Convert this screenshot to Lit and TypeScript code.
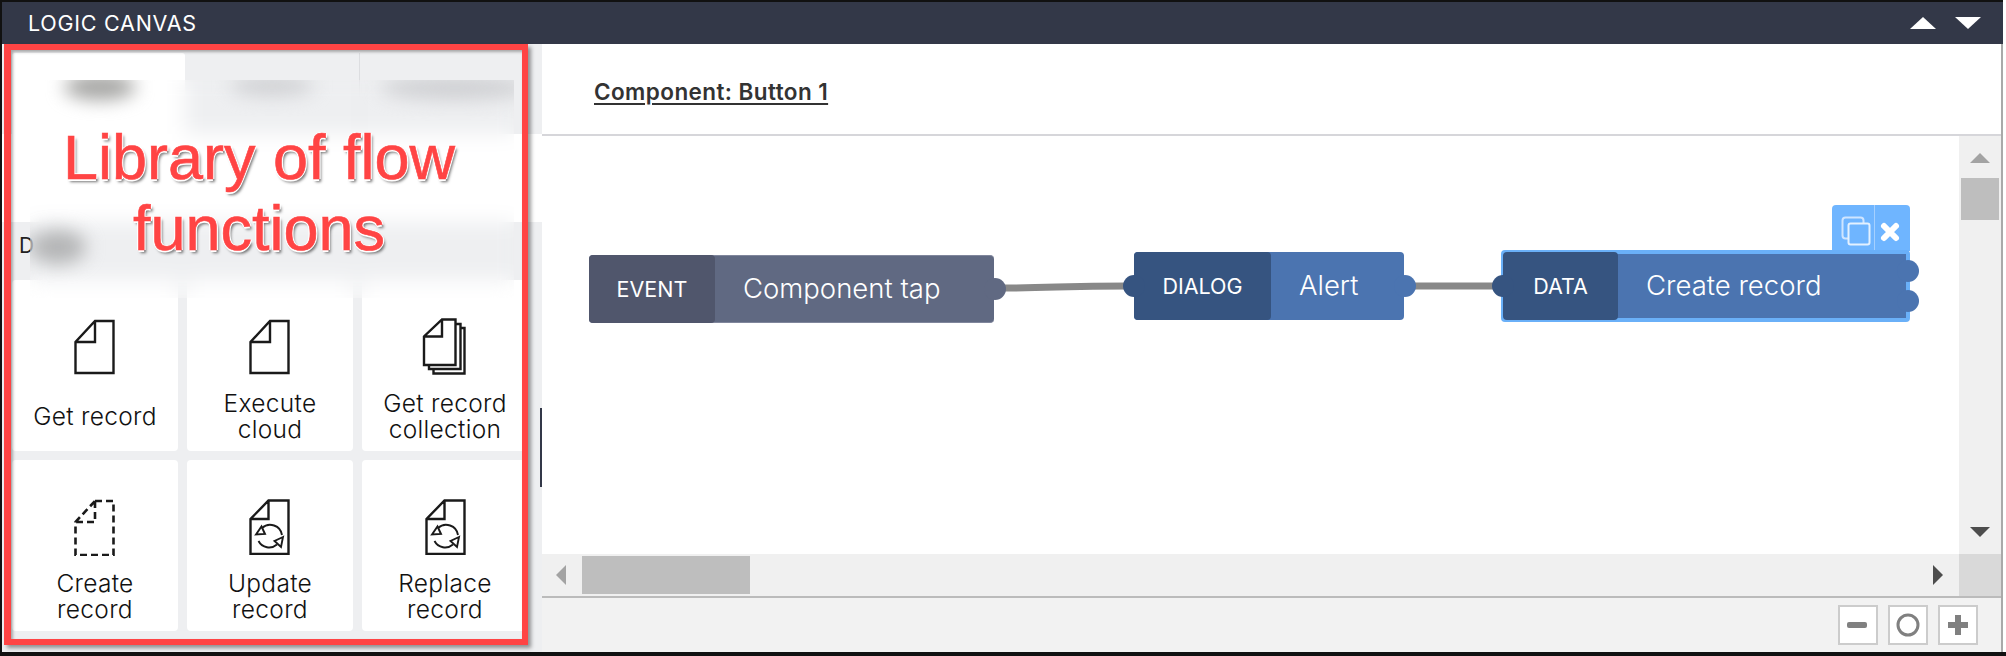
import { LitElement, html, css, svg } from "lit";
import { customElement } from "lit/decorators.js";

const page = svg`<path d="M21 2H39.5V54H1.5V23L21 2ZM21 2V23H1.5" />`;
const plain = html`<svg class="ic" width="42" height="56" viewBox="0 0 42 56">${page}</svg>`;
const stack = html`<svg class="ic" width="46" height="58" viewBox="0 0 46 58">
  <path d="M20 1.5H33.5V47H2V18.5L20 1.5ZM20 1.5V18.5H2" />
  <path d="M33.5 6H38.5V51H7V47" />
  <path d="M38.5 10H42.5V55.5H11.5V51" />
</svg>`;
const dashed = html`<svg class="ic dash" width="42" height="58" viewBox="0 0 42 58">
  <path d="M21 3H39.5V57H1.5V24L21 3ZM21 3V24H1.5" />
</svg>`;
const sync = (dx: number) => html`<svg class="ic" width="42" height="56" viewBox="0 0 42 56">
  <g transform="translate(${dx} 0)">
    <path d="M19.5 1.5H39.5V55H1.5V20L19.5 1.5ZM19.5 1.5V20H1.5" />
    <path class="thin" d="M33 36A12 12 0 0 0 13 29" />
    <path class="thin" d="M7 35.5L12.5 27.5L16 35Z" />
    <path class="thin" d="M9.5 42A12 12 0 0 0 28 45.5" />
    <path class="thin" d="M34 38L25.5 42L32 48Z" />
  </g>
</svg>`;

@customElement("app-root")
export class AppRoot extends LitElement {
  static styles = css`
    :host { display: block; width: 2006px; height: 656px; background: #fff; font-family: "Inter", "Open Sans", sans-serif; position: relative; overflow: hidden; }
    .frame { width: 2001px; height: 650px; border-top: 2px solid #111; border-left: 2px solid #111; display: flex; flex-direction: column; }
    .bottom { height: 4px; width: 2006px; background: #111; }
    .head { height: 42px; flex: none; background: #333848; color: #fff; display: flex; align-items: center; justify-content: space-between; padding: 0 22px 0 26px; font-size: 21.5px; letter-spacing: .75px; }
    .tri { display: flex; gap: 19px; }
    .body { flex: 1; display: flex; min-height: 0; position: relative; }
    .left { width: 540px; flex: none; background: #eeeff1; display: flex; flex-direction: column; position: relative; }
    .tabs { height: 81px; margin-top: 9px; display: grid; grid-template-columns: 183px 175px 1fr; }
    .tab { border-right: 1px solid #dcdde0; }
    .tab.on { background: #fff; border: 0; margin-left: 10px; width: 173px; border-radius: 3px 3px 0 0; }
    .tab.last { border: 0; }
    .white { height: 88px; background: #fff; }
    .drow { height: 58px; box-sizing: border-box; display: flex; align-items: center; padding: 0 0 12px 17px; font-size: 21px; color: #222; }
    .grid { display: grid; grid-template-columns: repeat(3, 166px); grid-auto-rows: 171px; gap: 9px; padding-left: 10px; }
    .cell { background: #fff; border-radius: 4px; padding-top: 40px; display: flex; flex-direction: column; align-items: center; box-sizing: border-box; }
    .ibox { height: 54px; flex: none; display: flex; align-items: center; justify-content: center; }
    .ic { flex: none; fill: none; stroke: #1a1a1a; stroke-width: 2.4; }
    .ic .thin { stroke-width: 1.9; }
    .ic.dash { stroke-width: 2.6; stroke-dasharray: 7 4; }
    .lab { margin-top: 15px; height: 54px; display: flex; align-items: center; text-align: center; font-size: 24.5px; font-weight: 300; line-height: 26.5px; color: #111; letter-spacing: .3px; }
    .blur { position: absolute; left: 28px; top: 36px; width: 484px; height: 218px; backdrop-filter: blur(10px); overflow: hidden; }
    .blob { position: absolute; filter: blur(9px); border-radius: 50%; }
    .b1 { left: 34px; top: -6px; width: 72px; height: 26px; background: #a5a5a3; }
    .b2 { left: 200px; top: -4px; width: 84px; height: 20px; background: #cfd0d3; }
    .b3 { left: 350px; top: -4px; width: 150px; height: 24px; background: #cfd0d3; }
    .b4 { left: 0; top: 150px; width: 56px; height: 34px; background: #b4b5b6; }
    .right { flex: 1; min-width: 0; display: flex; flex-direction: column; background: #fff; border-right: 2px solid #a9a9a9; }
    .title { height: 92px; flex: none; box-sizing: border-box; border-bottom: 2px solid #d6d6da; display: flex; align-items: center; padding: 4px 0 0 52px; }
    .title span { font-size: 22.5px; font-weight: 600; color: #333; letter-spacing: .42px; text-decoration: underline; text-underline-offset: 3px; text-decoration-thickness: 2px; }
    .mid { display: flex; height: 418px; flex: none; }
    .canvas { flex: 1; position: relative; background: #fff; }
    .wires { position: absolute; inset: 0; width: 100%; height: 100%; fill: none; stroke: #888; stroke-width: 7; }
    .vs { width: 42px; flex: none; background: #f0f0f0; position: relative; }
    .thumb { background: #bebebe; position: absolute; }
    .thumb.v { left: 2px; width: 38px; top: 42px; height: 42px; }
    .arrow { position: absolute; }
    .hs { height: 42px; flex: none; display: flex; }
    .track { flex: 1; background: #f0f0f0; position: relative; }
    .thumb.h { left: 40px; top: 2px; width: 168px; height: 38px; }
    .corner { width: 42px; background: #d9d9d9; }
    .foot { flex: 1; background: #f2f2f2; border-top: 2px solid #bbb; display: flex; justify-content: flex-end; align-items: center; gap: 10px; padding-right: 23px; }
    .zb { width: 40px; height: 40px; box-sizing: border-box; border: 2px solid #ccc; background: #fff; display: flex; align-items: center; justify-content: center; }
    .node { position: absolute; display: flex; color: #fff; border-radius: 4px; box-sizing: border-box; }
    .nl { flex: none; display: flex; align-items: center; justify-content: center; font-size: 21.5px; border-radius: 4px; padding-bottom: 1px; box-sizing: border-box; }
    .nb { flex: 1; display: flex; align-items: center; padding: 0 0 2px 28px; font-size: 27.5px; font-weight: 300; }
    .event { left: 47px; top: 119px; width: 405px; height: 68px; background: #606982; border-top: 1px solid #80869c; border-bottom: 1px solid #80869c; }
    .event .nl { width: 126px; background: #50566c; margin: -1px 0; }
    .dialog { left: 592px; top: 116px; width: 270px; height: 68px; background: #4b74b0; }
    .dialog .nl { width: 137px; background: #365480; }
    .data { left: 959px; top: 114px; width: 409px; height: 72px; background: #4b74b0; border: 4px solid #6ab0f8; }
    .data .nl { width: 115px; background: #365480; margin: -2px 0 -2px -2px; }
    .port { position: absolute; width: 22px; height: 22px; border-radius: 50%; }
    .acts { position: absolute; left: 1290px; top: 69px; width: 78px; height: 46px; background: #6fb5ff; border-radius: 4px 4px 0 0; }
    .red { position: absolute; left: 4px; top: 44px; width: 524px; height: 601px; box-sizing: border-box; border: 6px solid #ff4444; border-left-width: 7px; box-shadow: 3px 3px 4px rgba(0,0,0,.4), inset 2px 2px 3px rgba(0,0,0,.3); }
    .note { position: absolute; left: 58px; top: 122px; width: 402px; text-align: center; font-family: "Liberation Sans", Arial, sans-serif; font-size: 63px; line-height: 71px; color: #ff4444; -webkit-text-stroke: .6px #ff4444; text-shadow: 1.5px 0 0 #fff, -1.5px 0 0 #fff, 0 1.5px 0 #fff, 0 -1.5px 0 #fff, 2px 3px 3px rgba(0,0,0,.55); }
    .handle { position: absolute; left: 538px; top: 364px; width: 2px; height: 79px; background: #333848; }
  `;

  private cell(icon: unknown, a: string, b?: string) {
    return html`<div class="cell"><div class="ibox">${icon}</div><div class="lab"><div>${a}${b ? html`<br />${b}` : ""}</div></div></div>`;
  }

  render() {
    return html`
      <div class="frame">
        <div class="head">
          <span>LOGIC CANVAS</span>
          <svg class="tri" width="71" height="12" viewBox="0 0 71 12"><polygon points="0,12 13,0 26,12" fill="#fff" /><polygon points="45,0 71,0 58,12" fill="#fff" /></svg>
        </div>
        <div class="body">
          <div class="left">
            <div class="tabs"><div class="tab on"></div><div class="tab"></div><div class="tab last"></div></div>
            <div class="white"></div>
            <div class="drow">D</div>
            <div class="grid">
              ${this.cell(plain, "Get record")}
              ${this.cell(plain, "Execute", "cloud")}
              ${this.cell(stack, "Get record", "collection")}
              ${this.cell(dashed, "Create", "record")}
              ${this.cell(sync(0), "Update", "record")}
              ${this.cell(sync(1), "Replace", "record")}
            </div>
            <div class="blur">
              <div class="blob b1"></div><div class="blob b2"></div><div class="blob b3"></div><div class="blob b4"></div>
            </div>
            <div class="handle"></div>
          </div>
          <div class="right">
            <div class="title"><span>Component: Button 1</span></div>
            <div class="mid">
              <div class="canvas">
                <svg class="wires" viewBox="0 0 1415 418">
                  <path d="M460 152C510 152 520 150 585 150" />
                  <path d="M870 150H955" />
                </svg>
                <div class="node event">
                  <div class="nl">EVENT</div><div class="nb">Component tap</div>
                  <div class="port" style="right:-12px;top:22px;background:#606982"></div>
                </div>
                <div class="node dialog">
                  <div class="port" style="left:-11px;top:23px;background:#365480"></div>
                  <div class="nl">DIALOG</div><div class="nb">Alert</div>
                  <div class="port" style="right:-12px;top:23px;background:#4b74b0"></div>
                </div>
                <div class="acts">
                  <svg width="78" height="46" viewBox="0 0 78 46" fill="none">
                    <rect x="10.5" y="12.5" width="21" height="21" rx="3" stroke="#cfe5ff" stroke-width="2" />
                    <rect x="16.5" y="18.5" width="21" height="21" rx="2" fill="#6fb5ff" stroke="#e4f1ff" stroke-width="2" />
                    <line x1="42.5" y1="0" x2="42.5" y2="46" stroke="#a5d0ff" />
                    <path d="M52 21L64 33M64 21L52 33" stroke="#fff" stroke-width="6" stroke-linecap="round" />
                  </svg>
                </div>
                <div class="node data">
                  <div class="port" style="left:-13px;top:21px;background:#365480"></div>
                  <div class="nl">DATA</div><div class="nb">Create record</div>
                  <div class="port" style="right:-13px;top:6px;background:#4b74b0"></div>
                  <div class="port" style="right:-13px;top:36px;background:#4b74b0"></div>
                </div>
              </div>
              <div class="vs">
                <svg class="arrow" style="left:11px;top:17px" width="20" height="10"><polygon points="0,10 10,0 20,10" fill="#a3a3a3" /></svg>
                <div class="thumb v"></div>
                <svg class="arrow" style="left:11px;top:391px" width="20" height="10"><polygon points="0,0 20,0 10,10" fill="#4d4d4d" /></svg>
              </div>
            </div>
            <div class="hs">
              <div class="track">
                <svg class="arrow" style="left:14px;top:11px" width="10" height="20"><polygon points="10,0 10,20 0,10" fill="#a3a3a3" /></svg>
                <div class="thumb h"></div>
                <svg class="arrow" style="right:16px;top:11px" width="10" height="20"><polygon points="0,0 10,10 0,20" fill="#4d4d4d" /></svg>
              </div>
              <div class="corner"></div>
            </div>
            <div class="foot">
              <div class="zb"><svg width="22" height="8"><rect y="1" width="20" height="6" rx="2" fill="#808080" /></svg></div>
              <div class="zb"><svg width="24" height="24"><circle cx="12" cy="12" r="10" fill="none" stroke="#808080" stroke-width="3" /></svg></div>
              <div class="zb"><svg width="22" height="22"><path d="M11 1V21M1 11H21" stroke="#808080" stroke-width="6" /></svg></div>
            </div>
          </div>
        </div>
      </div>
      <div class="bottom"></div>
      <div class="red"></div>
      <div class="note">Library of flow<br />functions</div>
    `;
  }
}
